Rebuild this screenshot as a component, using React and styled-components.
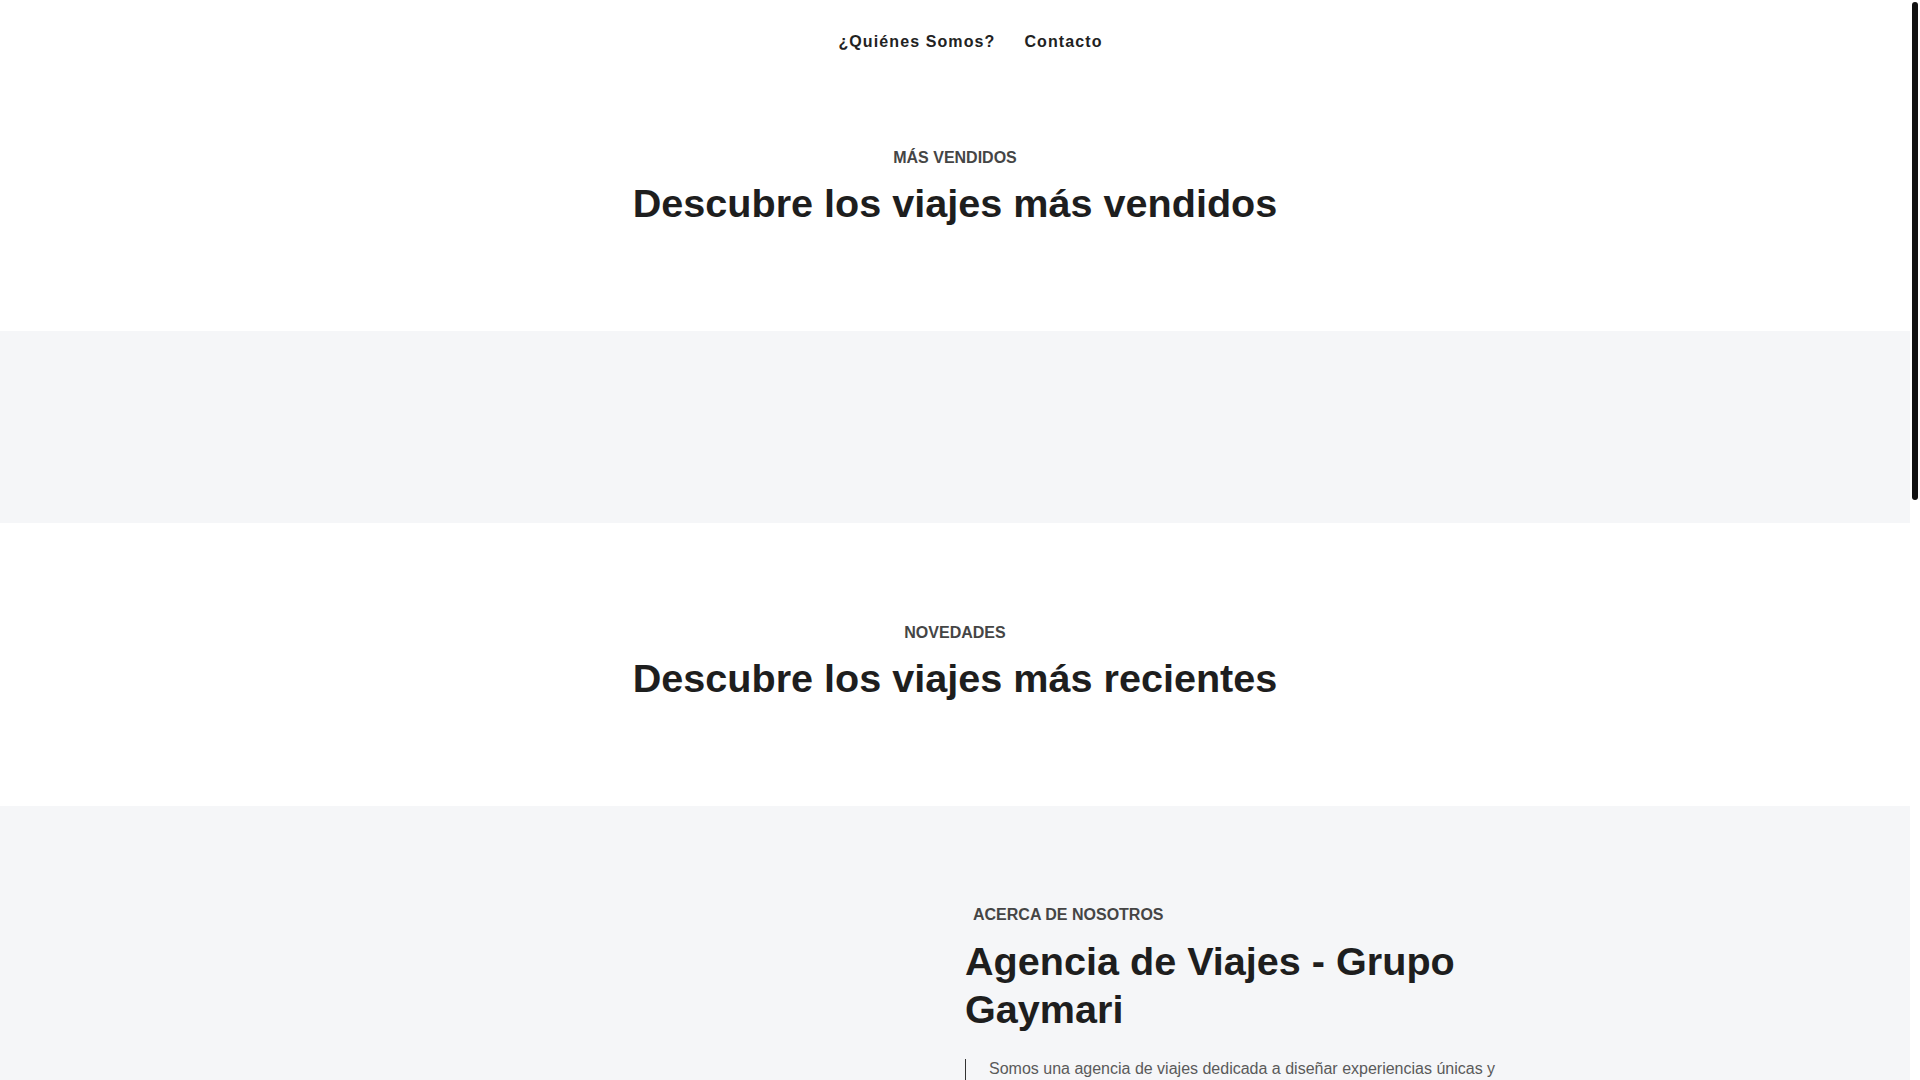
import React from "react";
import styled, { createGlobalStyle } from "styled-components";

const GlobalStyle = createGlobalStyle`
  html, body {
    margin: 0;
    padding: 0;
    background: #ffffff;
    font-family: "Liberation Sans", Arial, Helvetica, sans-serif;
    color: #1e1e1e;
  }
  * { box-sizing: border-box; }
  html { scrollbar-width: none; }
  html::-webkit-scrollbar { width: 0; height: 0; }
`;

const Page = styled.div`
  width: calc(100% - 10px);
`;

const ScrollThumb = styled.div`
  position: fixed;
  top: 2px;
  right: 2px;
  width: 6px;
  height: 498px;
  border-radius: 3px;
  background: #111111;
  z-index: 10;
`;

const Header = styled.header`
  height: 83px;
  display: flex;
  align-items: center;
  justify-content: center;
  padding-left: 31px;
`;

const NavList = styled.nav`
  display: flex;
  align-items: center;
  gap: 29px;
`;

const NavLink = styled.a`
  font-size: 16px;
  font-weight: 700;
  letter-spacing: 1.1px;
  color: #222222;
  text-decoration: none;
  line-height: 24px;
  cursor: pointer;
`;

const Section = styled.section`
  background: ${(p) => (p.$muted ? "#f5f6f8" : "#ffffff")};
  padding: ${(p) => p.$top}px 0 ${(p) => p.$bottom}px;
  min-height: ${(p) => p.$minHeight || 0}px;
`;

const SectionHead = styled.div`
  display: flex;
  flex-direction: column;
  align-items: center;
  gap: 9px;
  text-align: center;
`;

const Eyebrow = styled.span`
  display: block;
  font-size: 16px;
  font-weight: 700;
  line-height: 24px;
  text-transform: uppercase;
  color: #454545;
  padding-left: ${(p) => p.$indent || 0}px;
`;

const Title = styled.h2`
  margin: 0;
  font-size: 39.6px;
  font-weight: 700;
  line-height: 48px;
  color: #1e1e1e;
`;

const Container = styled.div`
  width: 1140px;
  margin: 0 auto;
  display: grid;
  grid-template-columns: 1fr 1fr;
`;

const Column = styled.div`
  padding: 0 10px;
  display: flex;
  flex-direction: column;
`;

const AboutTitle = styled(Title)`
  margin-top: 10px;
`;

const Quote = styled.div`
  margin-top: 26px;
  border-left: 1px solid #333333;
  padding-left: 23px;
`;

const Paragraph = styled.p`
  margin: 0 0 16px;
  font-size: 16px;
  line-height: 20.8px;
  color: #5a5a5a;
`;

const Footer = styled.footer`
  height: 400px;
  background: #ffffff;
  display: flex;
  align-items: center;
  justify-content: center;
  font-size: 14px;
  color: #777777;
`;

export default function App() {
  return (
    <>
      <GlobalStyle />
      <ScrollThumb />
      <Page>
        <Header>
          <NavList>
            <NavLink>¿Quiénes Somos?</NavLink>
            <NavLink>Contacto</NavLink>
          </NavList>
        </Header>

        <Section $top={63} $bottom={104}>
          <SectionHead>
            <Eyebrow>Más vendidos</Eyebrow>
            <Title>Descubre los viajes más vendidos</Title>
          </SectionHead>
        </Section>

        <Section $muted $top={0} $bottom={0} $minHeight={192} />

        <Section $top={98} $bottom={104}>
          <SectionHead>
            <Eyebrow>Novedades</Eyebrow>
            <Title>Descubre los viajes más recientes</Title>
          </SectionHead>
        </Section>

        <Section $muted $top={97} $bottom={96} $minHeight={1136}>
          <Container>
            <Column />
            <Column>
              <Eyebrow $indent={8}>Acerca de nosotros</Eyebrow>
              <AboutTitle>Agencia de Viajes - Grupo Gaymari</AboutTitle>
              <Quote>
                <Paragraph>
                  Somos una agencia de viajes dedicada a diseñar experiencias únicas y
                  personalizadas para cada uno de nuestros clientes. Nos encargamos de
                  cada detalle para que solo tengas que preocuparte por disfrutar.
                </Paragraph>
                <Paragraph>
                  Con años de experiencia en el sector, ofrecemos circuitos nacionales e
                  internacionales, escapadas de fin de semana y viajes a medida con el
                  mejor acompañamiento antes, durante y después de tu viaje.
                </Paragraph>
              </Quote>
            </Column>
          </Container>
        </Section>

        <Footer>© Grupo Gaymari — Agencia de Viajes</Footer>
      </Page>
    </>
  );
}
